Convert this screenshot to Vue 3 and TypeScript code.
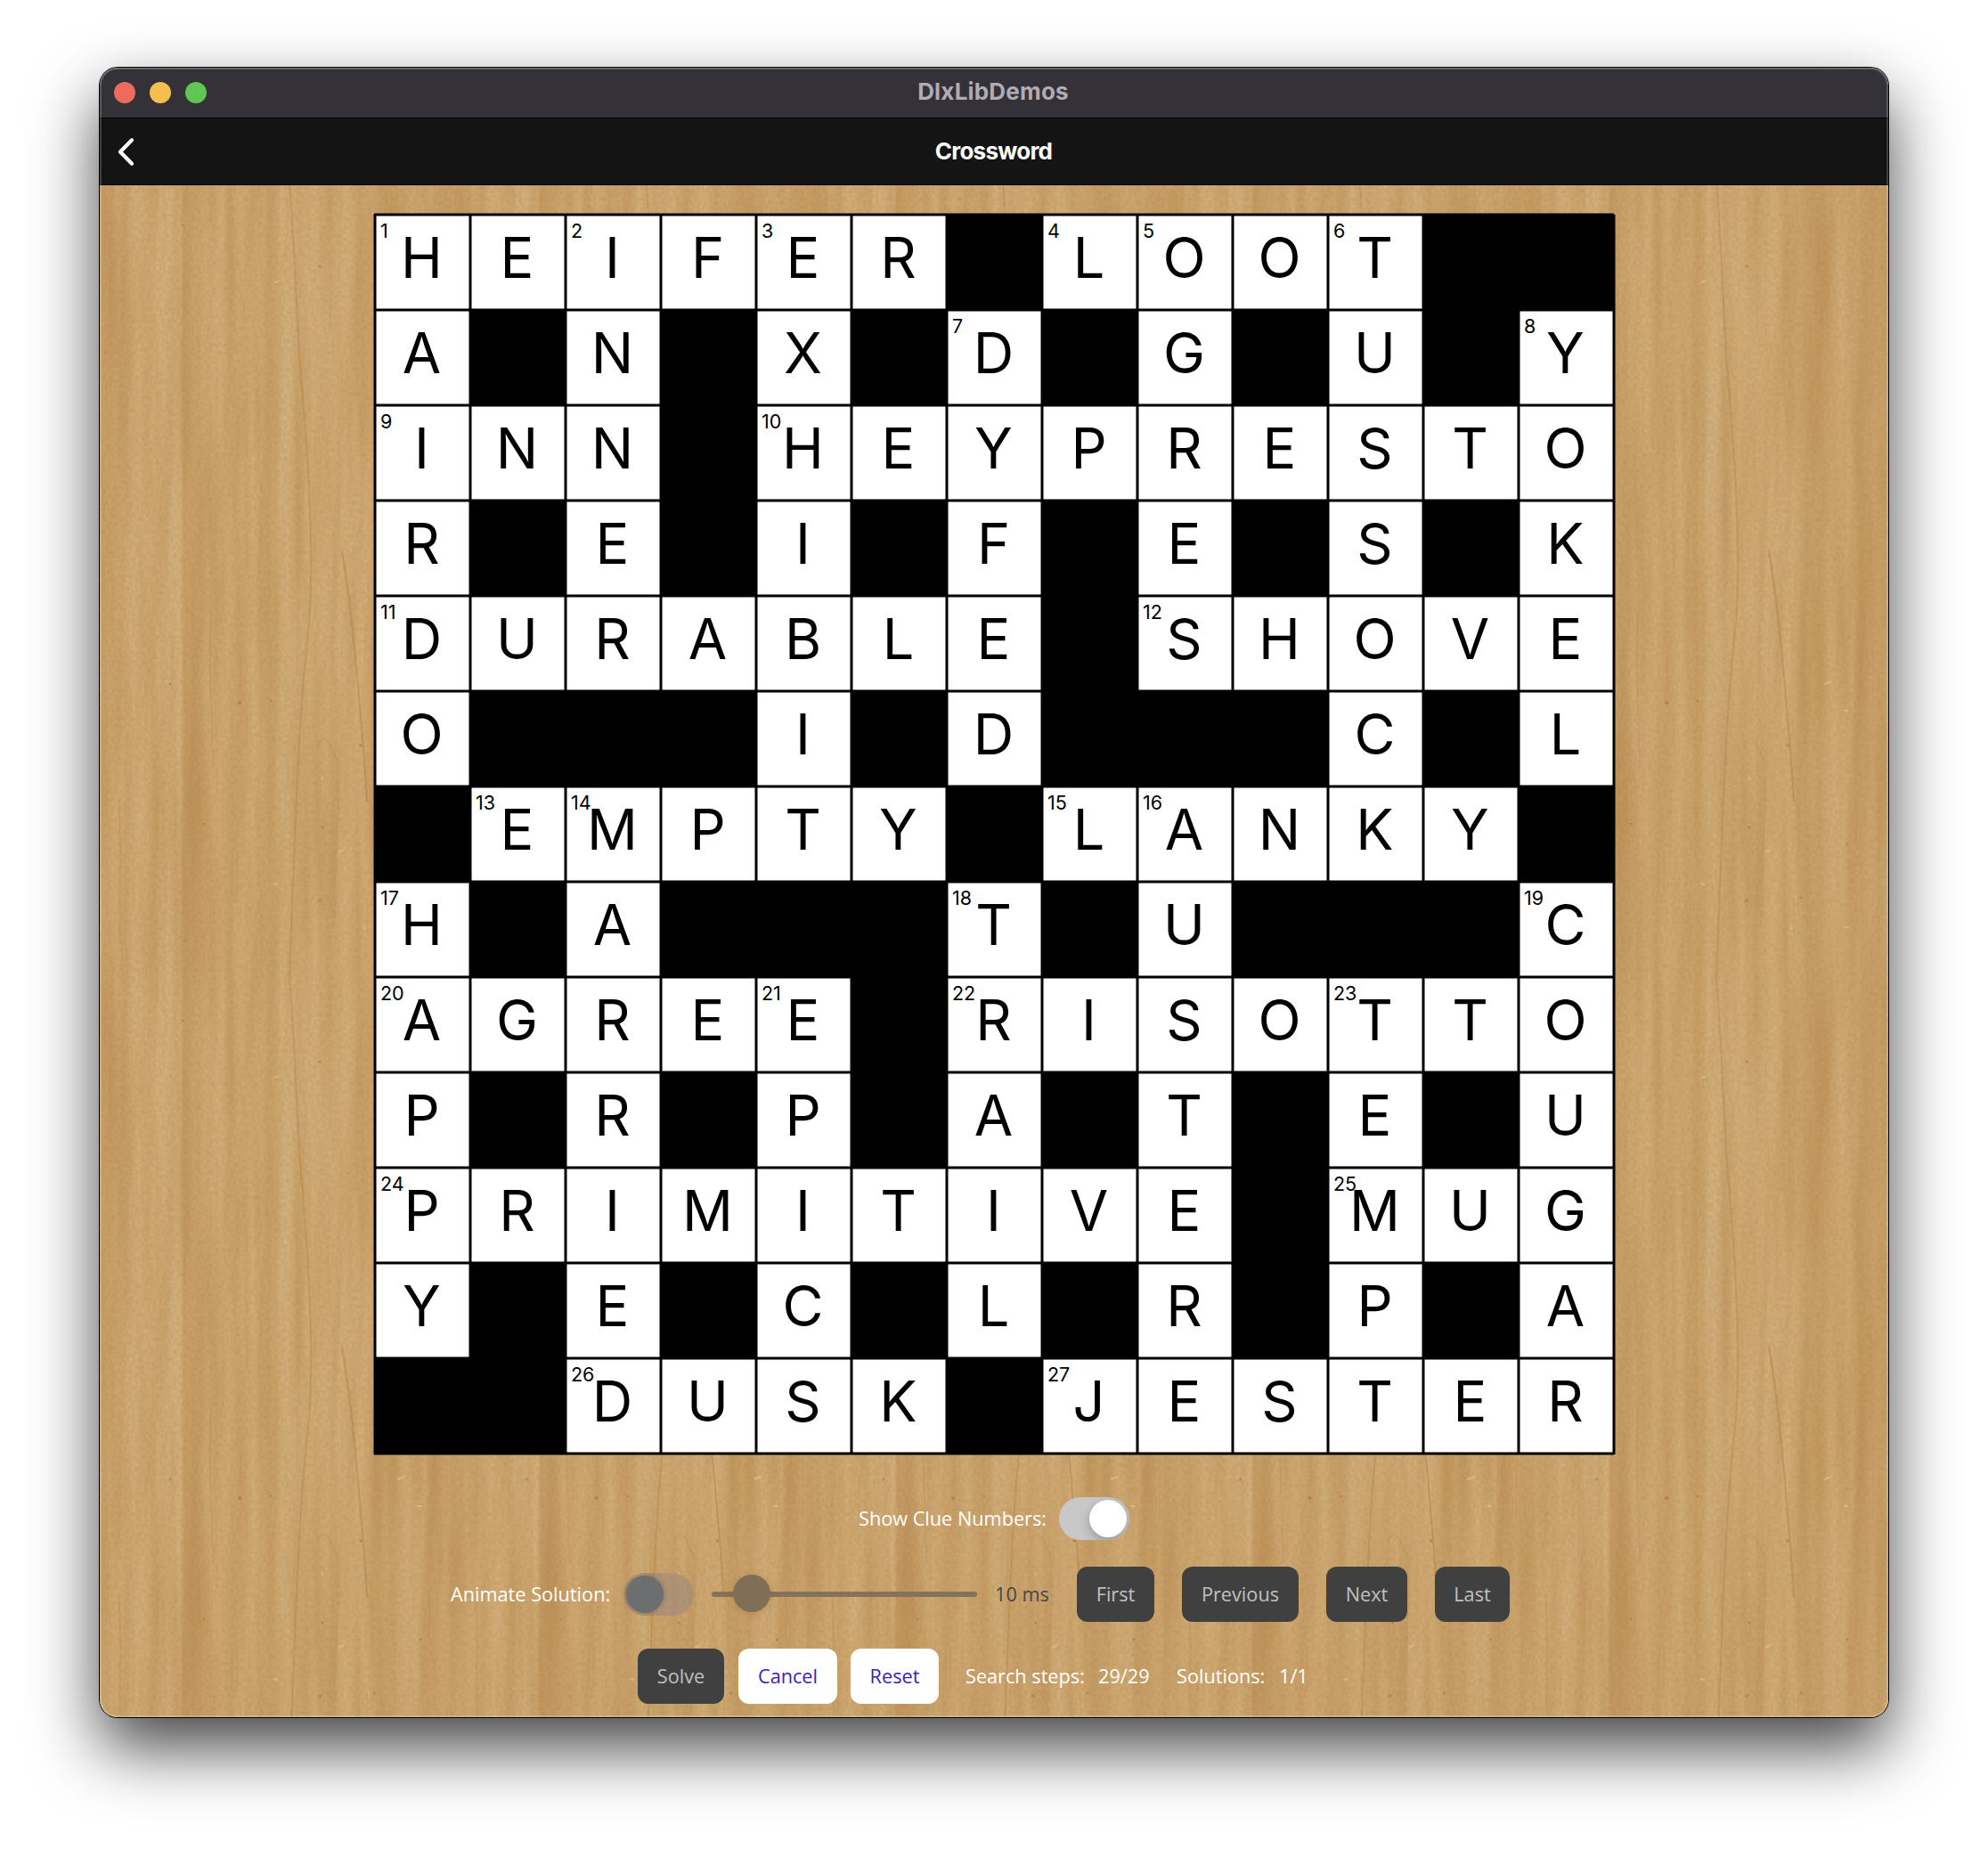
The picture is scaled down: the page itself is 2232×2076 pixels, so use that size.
<script setup lang="ts">
import { computed, ref } from 'vue'

interface Cell {
  key: string
  letter: string
  clue: number | null
  block: boolean
}

const SIZE = 13
const PITCH = 107

const solution: string[] = [
  'HEIFER#LOOT##',
  'A#N#X#D#G#U#Y',
  'INN#HEYPRESTO',
  'R#E#I#F#E#S#K',
  'DURABLE#SHOVE',
  'O###I#D###C#L',
  '#EMPTY#LANKY#',
  'H#A###T#U###C',
  'AGREE#RISOTTO',
  'P#R#P#A#T#E#U',
  'PRIMITIVE#MUG',
  'Y#E#C#L#R#P#A',
  '##DUSK#JESTER',
]

const showClueNumbers = ref(true)
const animateSolution = ref(false)

const open = (r: number, c: number): boolean =>
  r >= 0 && c >= 0 && r < SIZE && c < SIZE && solution[r][c] !== '#'

const cells = computed<Cell[]>(() => {
  const out: Cell[] = []
  let next = 1
  for (let r = 0; r < SIZE; r++) {
    for (let c = 0; c < SIZE; c++) {
      const isOpen = open(r, c)
      const across = isOpen && !open(r, c - 1) && open(r, c + 1)
      const down = isOpen && !open(r - 1, c) && open(r + 1, c)
      out.push({
        key: `${r}-${c}`,
        letter: isOpen ? solution[r][c] : '',
        clue: across || down ? next++ : null,
        block: !isOpen,
      })
    }
  }
  return out
})

const gridLines = Array.from({ length: SIZE + 1 }, (_, i) => i * PITCH + 2)
const steps = ['First', 'Previous', 'Next', 'Last']
</script>

<template>
  <div class="desktop">
    <div class="window">
      <header class="titlebar">
        <div class="lights">
          <span class="light close"></span>
          <span class="light minimise"></span>
          <span class="light zoom"></span>
        </div>
        <div class="window-title">DlxLibDemos</div>
      </header>

      <nav class="navbar">
        <svg class="back" width="24" height="36" viewBox="0 0 24 36">
          <path d="M18 5.2 L5 18.5 L18 31.8" fill="none" stroke="#fff" stroke-width="4.2" stroke-linecap="round" stroke-linejoin="round" />
        </svg>
        <h1 class="page-title">Crossword</h1>
      </nav>

      <main class="content">
        <svg class="wood" width="2008" height="1720">
          <defs>
            <linearGradient id="bands" x1="0" x2="1" y1="0" y2="0">
              <stop offset="0" stop-color="#b98d52" stop-opacity=".3" />
              <stop offset=".05" stop-color="#c59c64" stop-opacity=".3" />
              <stop offset=".12" stop-color="#d2b07c" stop-opacity=".2" />
              <stop offset=".225" stop-color="#d4b482" stop-opacity=".35" />
              <stop offset=".235" stop-color="#b88b4e" stop-opacity=".42" />
              <stop offset=".28" stop-color="#b98e54" stop-opacity=".28" />
              <stop offset=".32" stop-color="#d3b27f" stop-opacity=".25" />
              <stop offset=".38" stop-color="#c0935a" stop-opacity=".25" />
              <stop offset=".43" stop-color="#d0ad78" stop-opacity=".2" />
              <stop offset=".475" stop-color="#bc9056" stop-opacity=".35" />
              <stop offset=".51" stop-color="#d6b684" stop-opacity=".4" />
              <stop offset=".62" stop-color="#ceab76" stop-opacity=".2" />
              <stop offset=".74" stop-color="#d1af7b" stop-opacity=".25" />
              <stop offset=".78" stop-color="#b98c50" stop-opacity=".32" />
              <stop offset=".83" stop-color="#ba8e54" stop-opacity=".3" />
              <stop offset=".87" stop-color="#cfac78" stop-opacity=".2" />
              <stop offset=".92" stop-color="#bd9158" stop-opacity=".3" />
              <stop offset="1" stop-color="#b98d52" stop-opacity=".3" />
            </linearGradient>
            <filter id="streaks" x="0" y="0" width="100%" height="100%" color-interpolation-filters="sRGB">
              <feTurbulence type="fractalNoise" baseFrequency="0.06 0.0035" numOctaves="3" seed="8" stitchTiles="stitch" />
              <feColorMatrix values="0 0 0 0 .66  0 0 0 0 .46  0 0 0 0 .22  .6 0 0 0 -.18" />
            </filter>
            <filter id="grain" x="0" y="0" width="100%" height="100%" color-interpolation-filters="sRGB">
              <feTurbulence type="fractalNoise" baseFrequency="0.3 0.22" numOctaves="2" seed="3" stitchTiles="stitch" />
              <feColorMatrix values="0 0 0 0 .66  0 0 0 0 .46  0 0 0 0 .24  .42 0 0 0 -.1" />
            </filter>
            <pattern id="plank" width="400.5" height="893" patternUnits="userSpaceOnUse">
              <rect width="401" height="893" fill="#d2af7b" />
              <rect width="401" height="893" fill="url(#bands)" />
              <rect width="401" height="893" filter="url(#streaks)" />
              <rect width="401" height="893" filter="url(#grain)" />
              <g fill="none" stroke="#a87638" stroke-linecap="round">
                <path d="M213 0 C219 60 220 150 227 230 C236 330 240 420 235 492 C231 530 227 570 226 592 C223 640 221 680 219 732 C217 790 215 850 213 893" stroke-width="1.6" opacity=".4" />
                <path d="M272 410 C278 450 281 470 283 492 C287 530 289 550 291 575 C294 610 297 640 300 692" stroke-width="1.7" opacity=".48" />
                <path d="M22 690 C24 740 22 790 23 850" stroke-width="1.3" opacity=".28" />
                <path d="M125 480 C121 540 127 600 127 655" stroke-width="1.5" opacity=".25" />
                <path d="M265 640 C272 680 262 780 263 830" stroke-width="1.2" opacity=".18" />
                <path d="M300 800 V840 M154 750 V800 M370 690 V740 M389 520 V600" stroke-width="1.3" opacity=".22" />
                <path d="M245 630 C252 612 258 625 266 645 M245 815 C252 785 258 800 264 820" stroke-width="1.6" opacity=".2" />
              </g>
              <g fill="#a5692f" opacity=".55">
                <circle cx="293" cy="629" r="1.8" />
                <circle cx="250" cy="721" r="1.4" />
                <circle cx="247" cy="803" r="1.4" />
                <circle cx="117" cy="717" r="1.3" />
                <circle cx="79" cy="560" r="1.4" />
                <circle cx="157" cy="581" r="2" />
                <circle cx="192" cy="579" r="1.3" />
                <circle cx="95" cy="848" r="1.3" />
                <circle cx="308" cy="800" r="1.4" />
                <circle cx="247" cy="91" r="1.5" />
                <circle cx="93" cy="45" r="1.3" />
                <circle cx="360" cy="740" r="1.4" />
              </g>
              <g fill="none" stroke="#e0c68e" stroke-width="2" stroke-linecap="round" opacity=".6">
                <path d="M335 560 l7 -3 M357 590 h4 M269 748 l4 -1 M196 784 l3 1 M250 665 v2 M297 833 v2 M358 833 h3 M197 109 l3 -1 M207 59 v2" />
              </g>
            </pattern>
          </defs>
          <rect width="2008" height="1720" fill="url(#plank)" />
        </svg>

        <section class="board">
          <div v-for="cell in cells" :key="cell.key" class="cell" :class="{ block: cell.block }">
            <span v-if="cell.clue && showClueNumbers" class="clue">{{ cell.clue }}</span>
            <span class="letter">{{ cell.letter }}</span>
          </div>
          <svg class="lines" width="1395" height="1395">
            <g stroke="#000" stroke-width="3">
              <line v-for="p in gridLines" :key="'h' + p" x1="1" x2="1393" :y1="p" :y2="p" />
              <line v-for="p in gridLines" :key="'v' + p" y1="2" y2="1394" :x1="p" :x2="p" />
            </g>
          </svg>
        </section>

        <section class="row options">
          <span class="label w-show">Show Clue Numbers:</span>
          <span class="switch" :class="{ on: showClueNumbers }"><i></i></span>
        </section>

        <section class="row playback">
          <span class="label w-animate">Animate Solution:</span>
          <span class="switch disabled" :class="{ on: animateSolution }"><i></i></span>
          <span class="slider"><i></i></span>
          <span class="label dim w-delay">10 ms</span>
          <button v-for="s in steps" :key="s" class="btn dark" :class="s.toLowerCase()">{{ s }}</button>
        </section>

        <section class="row actions">
          <button class="btn dark solve">Solve</button>
          <button class="btn cancel">Cancel</button>
          <button class="btn reset">Reset</button>
          <span class="label w-steps">Search steps:</span>
          <span class="label w-count">29/29</span>
          <span class="label w-solutions">Solutions:</span>
          <span class="label w-found">1/1</span>
        </section>
      </main>
      <div class="rim"></div>
    </div>
  </div>
</template>

<style>
body {
  background: #fff;
}
</style>

<style scoped>
.desktop {
  box-sizing: border-box;
  width: 2232px;
  height: 2076px;
  padding: 76px 112px 0;
  overflow: hidden;
  font-family: Inter, "Liberation Sans", sans-serif;
}
.window {
  position: relative;
  width: 2008px;
  height: 1852px;
  border-radius: 20px;
  box-shadow: 0 0 0 1px #000, 0 34px 76px rgba(0, 0, 0, 0.74);
  display: flex;
  flex-direction: column;
}
.rim {
  position: absolute;
  inset: 0;
  border-radius: 20px;
  box-shadow: inset 0 1px 0 rgba(255, 255, 255, 0.2), inset 0 0 0 2px rgba(255, 255, 255, 0.18);
  pointer-events: none;
}
.titlebar {
  height: 56px;
  display: flex;
  align-items: center;
  background: #353139;
  border-bottom: 1px solid #000;
  border-radius: 20px 20px 0 0;
}
.lights {
  display: flex;
  gap: 16px;
  padding-left: 16px;
  width: 200px;
  box-sizing: border-box;
}
.light {
  width: 24px;
  height: 24px;
  border-radius: 50%;
}
.close { background: #ed6a5e; }
.minimise { background: #f5bf4f; }
.zoom { background: #61c554; }
.window-title {
  flex: 1;
  margin-right: 202px;
  text-align: center;
  font-size: 26px;
  line-height: 32px;
  font-weight: 700;
  letter-spacing: 0.2px;
  color: #b1acb4;
  padding-bottom: 3px;
}
.navbar {
  height: 74px;
  display: flex;
  align-items: center;
  background: #141414;
  border-bottom: 1px solid #000;
}
.back {
  margin-left: 18px;
  width: 24px;
}
.page-title {
  flex: 1;
  margin: 0 43px 0 0;
  text-align: center;
  font-size: 26px;
  line-height: 32px;
  font-weight: 700;
  letter-spacing: -0.75px;
  color: #fff;
}
.content {
  position: relative;
  flex: 1;
  border-radius: 0 0 20px 20px;
  overflow: hidden;
  display: flex;
  flex-direction: column;
  align-items: flex-start;
}
.wood {
  position: absolute;
  inset: 0;
}
.board {
  position: relative;
  margin: 33px 0 0 309px;
  display: grid;
  grid-template-columns: repeat(13, 107px);
  grid-auto-rows: 107px;
}
.lines {
  position: absolute;
  left: -2px;
  top: -2px;
}
.cell {
  position: relative;
  background: #fff;
  color: #000;
  text-align: center;
}
.cell.block { background: #000; }
.letter {
  display: block;
  margin-right: 2px;
  font-size: 63px;
  line-height: 97px;
}
.clue {
  position: absolute;
  left: 6px;
  top: 0;
  font-size: 21.5px;
  line-height: 36px;
}
.row {
  position: relative;
  display: flex;
  align-items: center;
}
.label {
  font-family: "Open Sans", "Noto Sans", sans-serif;
  font-size: 21.7px;
  line-height: 32px;
  color: #fff;
  white-space: nowrap;
}
.dim { color: #484745; }
.options {
  margin: 48px 0 0 852px;
  height: 50px;
}
.options .label { padding-bottom: 1px; }
.w-show { width: 225px; }
.switch {
  position: relative;
  width: 79px;
  height: 48px;
  border-radius: 24px;
  background: #c8c8c8;
  overflow: hidden;
}
.switch i {
  position: absolute;
  left: 3px;
  top: 3px;
  width: 42px;
  height: 42px;
  border-radius: 50%;
  background: #fff;
}
.switch.on i {
  left: 34px;
  box-shadow: 0 4px 12px rgba(0, 0, 0, 0.25);
}
.switch.disabled { background: rgba(140, 130, 130, 0.42); }
.switch.disabled i {
  background: #6d6e70;
  box-shadow: 0 0 6px rgba(0, 0, 0, 0.25);
}
.playback {
  margin: 29px 0 0 394px;
  height: 62px;
}
.w-animate { width: 194px; }
.slider {
  position: relative;
  width: 298px;
  height: 6px;
  margin-left: 20px;
  border-radius: 3px;
  background: #84725a;
}
.slider i {
  position: absolute;
  left: 24px;
  top: -19px;
  width: 42px;
  height: 42px;
  border-radius: 50%;
  background: #806e57;
  box-shadow: 0 1px 8px rgba(80, 50, 10, 0.2);
}
.w-delay {
  width: 92px;
  margin-left: 20px;
}
.btn {
  box-sizing: border-box;
  height: 62px;
  padding: 0 0 1px;
  border: 0;
  border-radius: 12px;
  background: #fff;
  color: #3a20c4;
  font-family: "Open Sans", "Noto Sans", sans-serif;
  font-size: 21.7px;
  line-height: 32px;
}
.btn.dark {
  background: #404040;
  color: #c0c0c0;
}
.first { width: 87px; margin-right: 31px; }
.previous { width: 131px; margin-right: 31px; }
.next { width: 91px; margin-right: 31px; }
.last { width: 84px; }
.actions {
  margin: 30px 0 0 604px;
  height: 62px;
}
.solve { width: 97px; margin-right: 16px; }
.cancel { width: 111px; margin-right: 15px; }
.reset { width: 99px; margin-right: 30px; }
.w-steps { width: 149px; }
.w-count { width: 88px; }
.w-solutions { width: 115px; }
</style>
